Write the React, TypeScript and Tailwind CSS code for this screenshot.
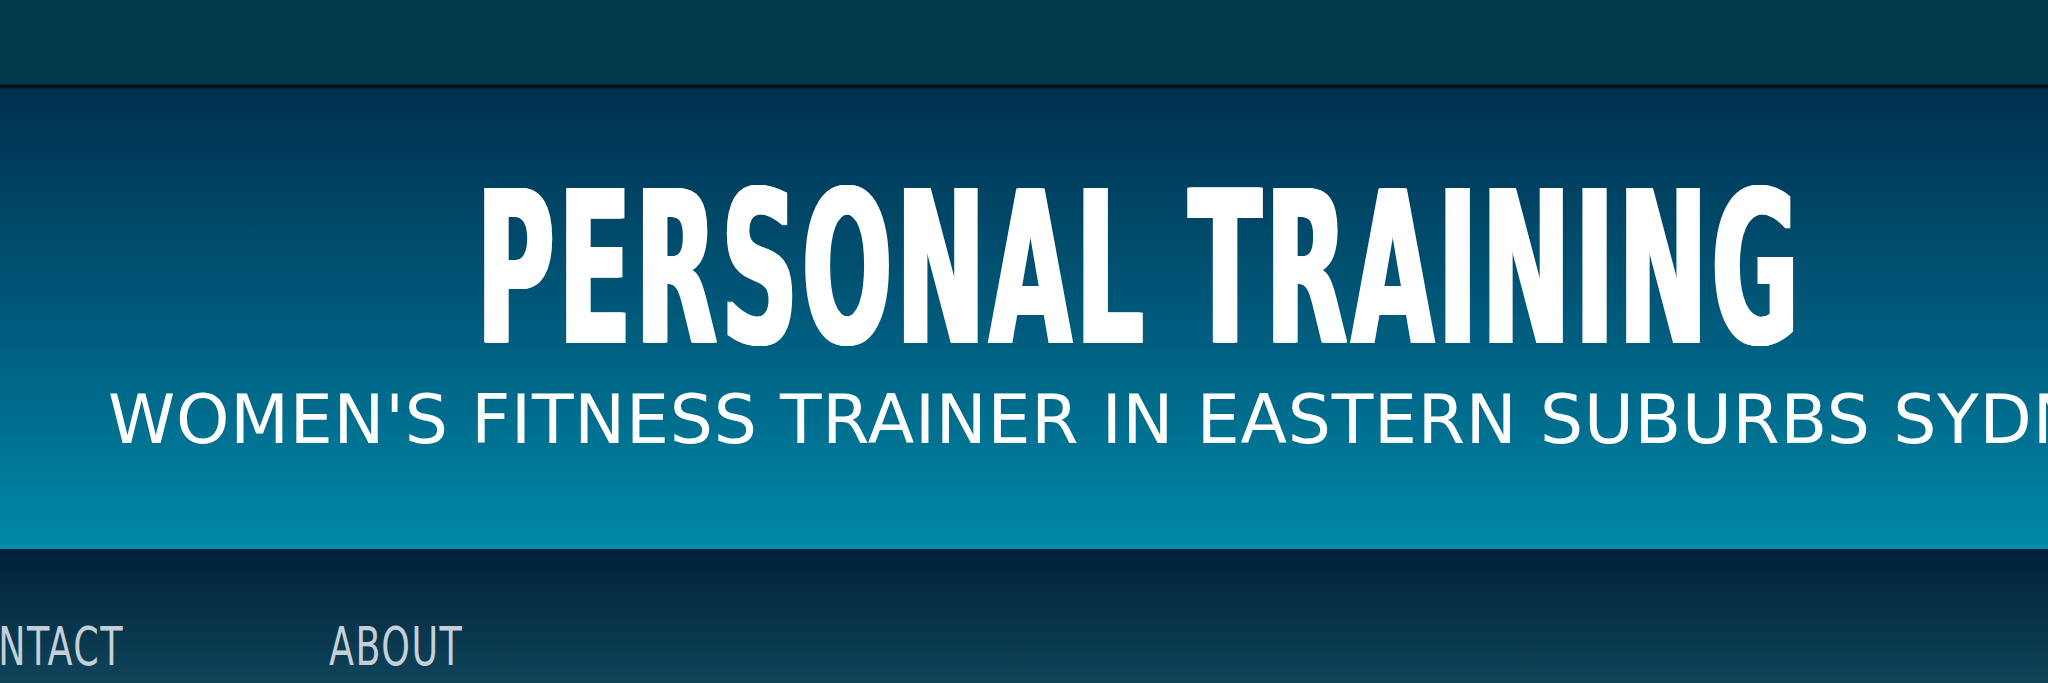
export default function App() {
  return (
    <div className="w-[2048px] h-[683px] overflow-hidden flex flex-col bg-[#0f4459]">
      {/* top strip */}
      <div className="h-[84px] shrink-0 bg-[#003a4c]" />
      <div className="h-[5px] shrink-0 bg-gradient-to-b from-[#03222c] via-[#010f14] to-[#032b3c]" />

      {/* banner */}
      <header className="relative h-[460px] shrink-0 overflow-hidden bg-gradient-to-b from-[#00304f] via-[#005a7b] to-[#0089a9]">
        <div className="absolute inset-x-0 bottom-0 h-[6px] bg-gradient-to-b from-transparent to-[#0b8fad]" />
        <div className="relative flex flex-col">
          <div className="mt-[75px] flex justify-center pl-[232px]">
            <h1
              className="scale-x-[0.555] whitespace-nowrap text-[212px] leading-none font-bold tracking-[8px] text-white [text-shadow:4px_0_0_#fff,-4px_0_0_#fff,2px_0_0_#fff,-2px_0_0_#fff]"
              style={{ fontFamily: '"DejaVu Sans Condensed", "Liberation Sans", sans-serif' }}
            >
              PERSONAL TRAINING
            </h1>
          </div>
          <p
            className="mt-[10px] ml-[108px] whitespace-nowrap text-[68px] leading-none tracking-[0.8px] text-white"
            style={{ fontFamily: '"DejaVu Sans", Verdana, sans-serif' }}
          >
            WOMEN'S FITNESS TRAINER IN EASTERN SUBURBS SYDNEY
          </p>
        </div>
      </header>

      {/* navigation */}
      <nav className="flex-1 bg-gradient-to-b from-[#02213a] to-[#0f4459]">
        <ul
          className="flex pt-[71px] ml-[-59px] gap-[144px] text-[54px] leading-none text-[#c6cfd7] tracking-[2px]"
          style={{ fontFamily: '"DejaVu Sans Condensed", "Liberation Sans", sans-serif' }}
        >
          <li className="whitespace-nowrap origin-left scale-x-[0.75]">CONTACT</li>
          <li className="whitespace-nowrap origin-left scale-x-[0.75]">ABOUT</li>
        </ul>
      </nav>
    </div>
  );
}
